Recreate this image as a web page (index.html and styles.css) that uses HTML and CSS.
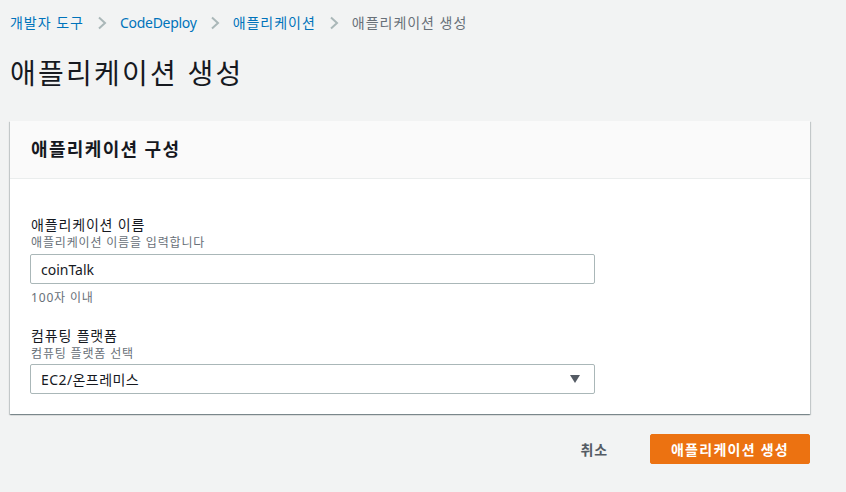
FILE: index.html
```html
<!DOCTYPE html>
<html lang="ko">
<head>
<meta charset="utf-8">
<title>애플리케이션 생성</title>
<link rel="stylesheet" href="styles.css">
</head>
<body>
<nav class="crumbs">
  <a class="crumb">개발자 도구</a>
  <svg class="chev" width="10" height="14" viewBox="0 0 10 14"><path d="M2 1.5 L8 7 L2 12.5" fill="none" stroke="#aab7b8" stroke-width="2"/></svg>
  <a class="crumb latin">CodeDeploy</a>
  <svg class="chev" width="10" height="14" viewBox="0 0 10 14"><path d="M2 1.5 L8 7 L2 12.5" fill="none" stroke="#aab7b8" stroke-width="2"/></svg>
  <a class="crumb">애플리케이션</a>
  <svg class="chev" width="10" height="14" viewBox="0 0 10 14"><path d="M2 1.5 L8 7 L2 12.5" fill="none" stroke="#aab7b8" stroke-width="2"/></svg>
  <span class="crumb current">애플리케이션 생성</span>
</nav>
<h1 class="title">애플리케이션 생성</h1>
<section class="card">
  <div class="card-head"><h2>애플리케이션 구성</h2></div>
  <div class="card-body">
    <div class="field">
      <div class="label">애플리케이션 이름</div>
      <div class="desc">애플리케이션 이름을 입력합니다</div>
      <div class="input latin">coinTalk</div>
      <div class="hint">100자 이내</div>
    </div>
    <div class="field second">
      <div class="label">컴퓨팅 플랫폼</div>
      <div class="desc">컴퓨팅 플랫폼 선택</div>
      <div class="input select">
        <span>EC2/온프레미스</span>
        <svg class="caret" width="10" height="8" viewBox="0 0 10 8"><path d="M0 0 H10 L5 8 Z" fill="#545b64"/></svg>
      </div>
    </div>
  </div>
</section>
<div class="actions">
  <button class="btn-cancel">취소</button>
  <button class="btn-primary">애플리케이션 생성</button>
</div>
</body>
</html>
```

FILE: styles.css
```css
* { box-sizing: border-box; }
body {
  margin: 0;
  padding: 0 36px 0 10px;
  background: #f2f3f3;
  font-family: "Noto Sans", "Noto Sans CJK KR", sans-serif;
  color: #16191f;
  width: 846px;
}
.crumbs {
  display: flex;
  align-items: center;
  height: 20px;
  margin-top: 13px;
  font-size: 14px;
  line-height: 20px;
  letter-spacing: 0.07em;
}
.crumb { color: #0073bb; }
.crumb.current { color: #687078; }
.crumbs .latin { letter-spacing: -0.02em; }
.chev { margin: 0 13px 0 13px; }
.title {
  margin: 22px 0 0 0;
  font-size: 28px;
  line-height: 36px;
  font-weight: 400;
  letter-spacing: 0.08em;
}
.card {
  margin-top: 30px;
  background: #fff;
  box-shadow: 0 1px 1px 0 rgba(0,28,36,.3), 1px 1px 1px 0 rgba(0,28,36,.15), -1px 1px 1px 0 rgba(0,28,36,.15);
}
.card-head {
  height: 58px;
  background: #fafafa;
  border-bottom: 1px solid #eaeded;
  padding: 0 20px 2px 21px;
  display: flex;
  align-items: center;
}
.card-head h2 {
  margin: 0;
  font-size: 18px;
  font-weight: 700;
  line-height: 24px;
  letter-spacing: 0.075em;
}
.card-body { padding: 36px 215px 20px 20px; }
.label { font-size: 14px; line-height: 20px; letter-spacing: 0.06em; padding-left: 1px; }
.desc, .hint { font-size: 12px; line-height: 16px; color: #687078; letter-spacing: 0.07em; padding-left: 1px; }
.input {
  margin-top: 3px;
  height: 30px;
  border: 1px solid #aab7b8;
  border-radius: 2px;
  padding: 0 10px;
  font-size: 14px;
  display: flex;
  align-items: center;
  letter-spacing: 0.03em;
}
.input.latin { letter-spacing: 0; }
.hint { margin-top: 6px; }
.second { margin-top: 20px; }
.second .input { margin-top: 2px; }
.select { justify-content: space-between; padding-right: 14px; }
.actions {
  display: flex;
  justify-content: flex-end;
  align-items: center;
  margin-top: 20px;
  gap: 20px;
}
button { font-family: inherit; cursor: pointer; }
.btn-cancel {
  background: none;
  border: none;
  padding: 0 22px;
  height: 30px;
  font-size: 14px;
  font-weight: 700;
  color: #545b64;
  letter-spacing: 0.06em;
}
.btn-primary {
  width: 160px;
  height: 30px;
  background: #ec7211;
  border: 1px solid #ec7211;
  border-radius: 2px;
  color: #fff;
  font-size: 14px;
  font-weight: 700;
  padding: 0;
  letter-spacing: 0.09em;
}
```
